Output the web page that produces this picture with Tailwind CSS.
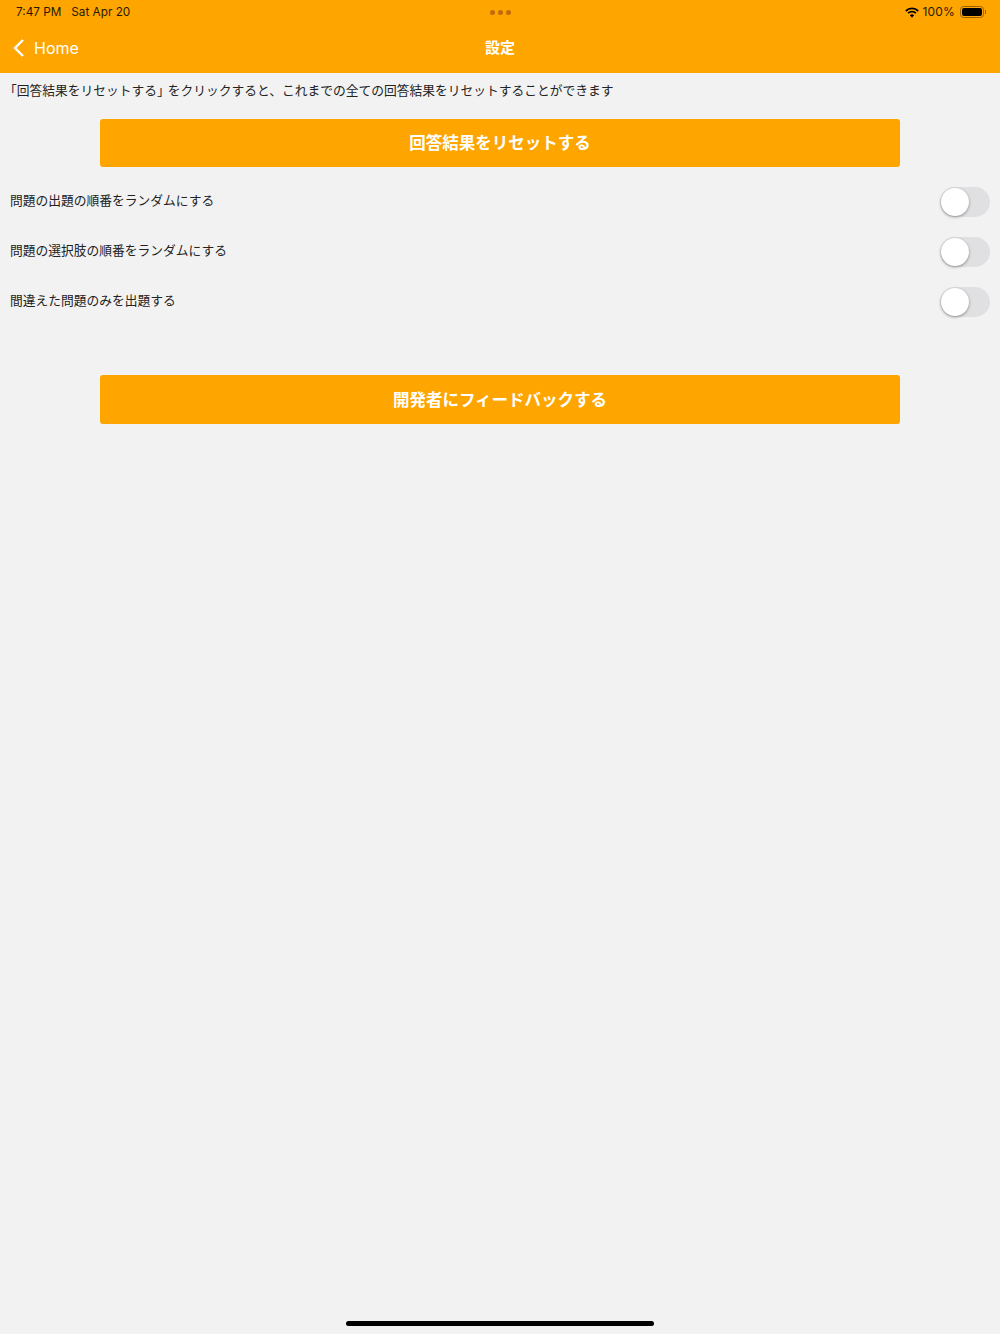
<!DOCTYPE html>
<html lang="ja">
<head>
    <meta charset="UTF-8">
    <meta name="viewport" content="width=device-width, initial-scale=1.0">
    <title>設定</title>
    <script src="https://cdn.jsdelivr.net/npm/@tailwindcss/browser@4"></script>
</head>
<body class="bg-[#f2f2f2] text-[#222] font-['Inter','Noto_Sans_CJK_JP',sans-serif]">
<div class="relative flex h-[1334px] w-[1000px] flex-col overflow-hidden">

    <!-- header -->
    <header class="h-[73px] bg-[#ffa500]">
        <div class="relative flex h-6 items-center justify-between pl-4 pr-[14px] text-[11.75px] text-[#2a1a00]">
            <div class="flex gap-[10px] pt-[2px]">
                <span>7:47 PM</span>
                <span>Sat Apr 20</span>
            </div>
            <div class="absolute left-[490px] top-[9.5px] flex gap-[3px]">
                <span class="size-[5px] rounded-full bg-[#c46a08]"></span>
                <span class="size-[5px] rounded-full bg-[#c46a08]"></span>
                <span class="size-[5px] rounded-full bg-[#c46a08]"></span>
            </div>
            <div class="flex items-center">
                <svg width="14" height="11" viewBox="0 0 14 11" class="mr-[3px] text-black">
                    <path d="M0.8 4 A8.7 8.7 0 0 1 13.2 4" fill="none" stroke="currentColor" stroke-width="1.8"/>
                    <path d="M3.1 6.2 A5.5 5.5 0 0 1 10.9 6.2" fill="none" stroke="currentColor" stroke-width="1.8"/>
                    <path d="M4.9 8.3 A3 3 0 0 1 9.1 8.3 L7 10.7 Z" fill="currentColor"/>
                </svg>
                <span class="text-[12px] tracking-[0.2px]">100%</span>
                <div class="ml-[5px] flex items-center">
                    <div class="h-[12px] w-[24px] rounded-[3.5px] border border-[#9a6200] p-[1px]">
                        <div class="h-full w-full rounded-[2px] bg-black"></div>
                    </div>
                    <div class="ml-[1px] h-1 w-[1px] bg-[#9a6200]"></div>
                </div>
            </div>
        </div>
        <div class="relative flex h-[49px] items-center justify-center text-white">
            <a href="#" class="absolute left-[13px] top-[15px] flex items-center gap-[10px] text-[16px]">
                <svg width="11" height="18" viewBox="0 0 11 18">
                    <path d="M10 1 L2 9 L10 17" fill="none" stroke="white" stroke-width="2.4"/>
                </svg>
                <span class="leading-[18px]">Home</span>
            </a>
            <h1 class="text-[15px] font-bold">設定</h1>
        </div>
    </header>

    <main class="flex flex-col">
        <p class="pl-1 pt-[9px] text-[12.75px] leading-[18px]"><span class="-mr-[2px]">「回答結果をリセットする」</span>をクリックすると、これまでの全ての回答結果をリセットすることができます</p>

        <button class="mx-auto mt-[19px] h-12 w-[800px] rounded-[3px] bg-[#ffa500] pt-[1px] text-[16.5px] font-bold text-white">回答結果をリセットする</button>

        <div class="mt-[20px] flex flex-col gap-5 px-[10px]">
            <div class="flex h-[30px] items-center justify-between">
                <span class="-mt-[2px] text-[12.75px]">問題の出題の順番をランダムにする</span>
                <div class="h-[30px] w-[50px] rounded-full bg-[#e0e0e2] p-[1px]">
                    <div class="size-7 rounded-full bg-white shadow-[0_1px_3px_rgba(0,0,0,0.4)]"></div>
                </div>
            </div>
            <div class="flex h-[30px] items-center justify-between">
                <span class="-mt-[2px] text-[12.75px]">問題の選択肢の順番をランダムにする</span>
                <div class="h-[30px] w-[50px] rounded-full bg-[#e0e0e2] p-[1px]">
                    <div class="size-7 rounded-full bg-white shadow-[0_1px_3px_rgba(0,0,0,0.4)]"></div>
                </div>
            </div>
            <div class="flex h-[30px] items-center justify-between">
                <span class="-mt-[2px] text-[12.75px]">間違えた問題のみを出題する</span>
                <div class="h-[30px] w-[50px] rounded-full bg-[#e0e0e2] p-[1px]">
                    <div class="size-7 rounded-full bg-white shadow-[0_1px_3px_rgba(0,0,0,0.4)]"></div>
                </div>
            </div>
        </div>

        <button class="mx-auto mt-[58px] h-[49px] w-[800px] rounded-[3px] bg-[#ffa500] pt-[1px] text-[16.5px] font-bold text-white">開発者にフィードバックする</button>
    </main>

    <!-- home indicator -->
    <div class="absolute bottom-[8px] left-[346px] h-[5px] w-[308px] rounded-full bg-black"></div>
</div>
</body>
</html>
